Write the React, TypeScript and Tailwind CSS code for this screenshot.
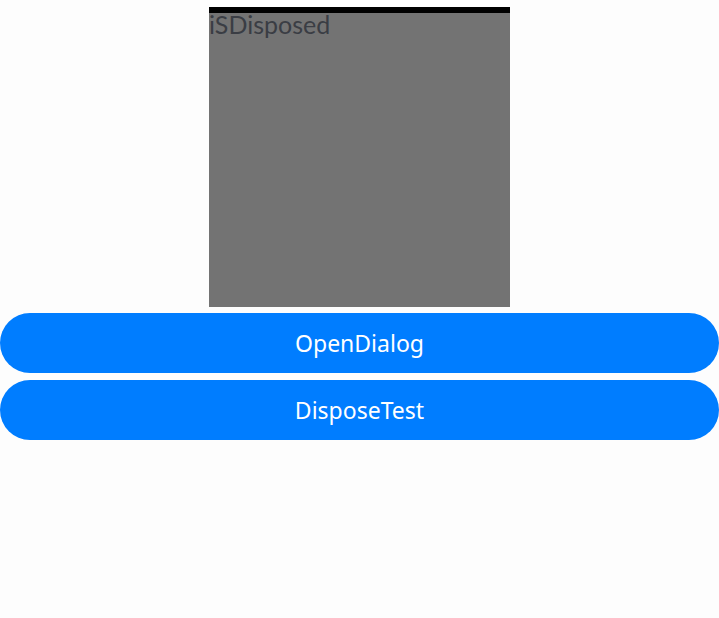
export default function App() {
  return (
    <div className="min-h-[618px] w-[719px] bg-[#fdfdfd] flex flex-col items-center pt-[7px]" style={{ fontFamily: '"Noto Sans", Roboto, sans-serif' }}>
      <div className="w-[301px] h-[300px] bg-[#737373] border-t-[6px] border-black">
        <span className="block text-[25px] leading-[25px] text-[#3a3d44] -mt-[1px]" style={{ fontFamily: 'Lato, "Noto Sans", sans-serif' }}>
          iSDisposed
        </span>
      </div>
      <div className="w-full flex flex-col gap-[7px] mt-[6px]">
        <button className="w-full h-[60px] rounded-full bg-[#007dff] text-white text-[23px] font-normal">OpenDialog</button>
        <button className="w-full h-[60px] rounded-full bg-[#007dff] text-white text-[23px] font-normal">DisposeTest</button>
      </div>
    </div>
  );
}
